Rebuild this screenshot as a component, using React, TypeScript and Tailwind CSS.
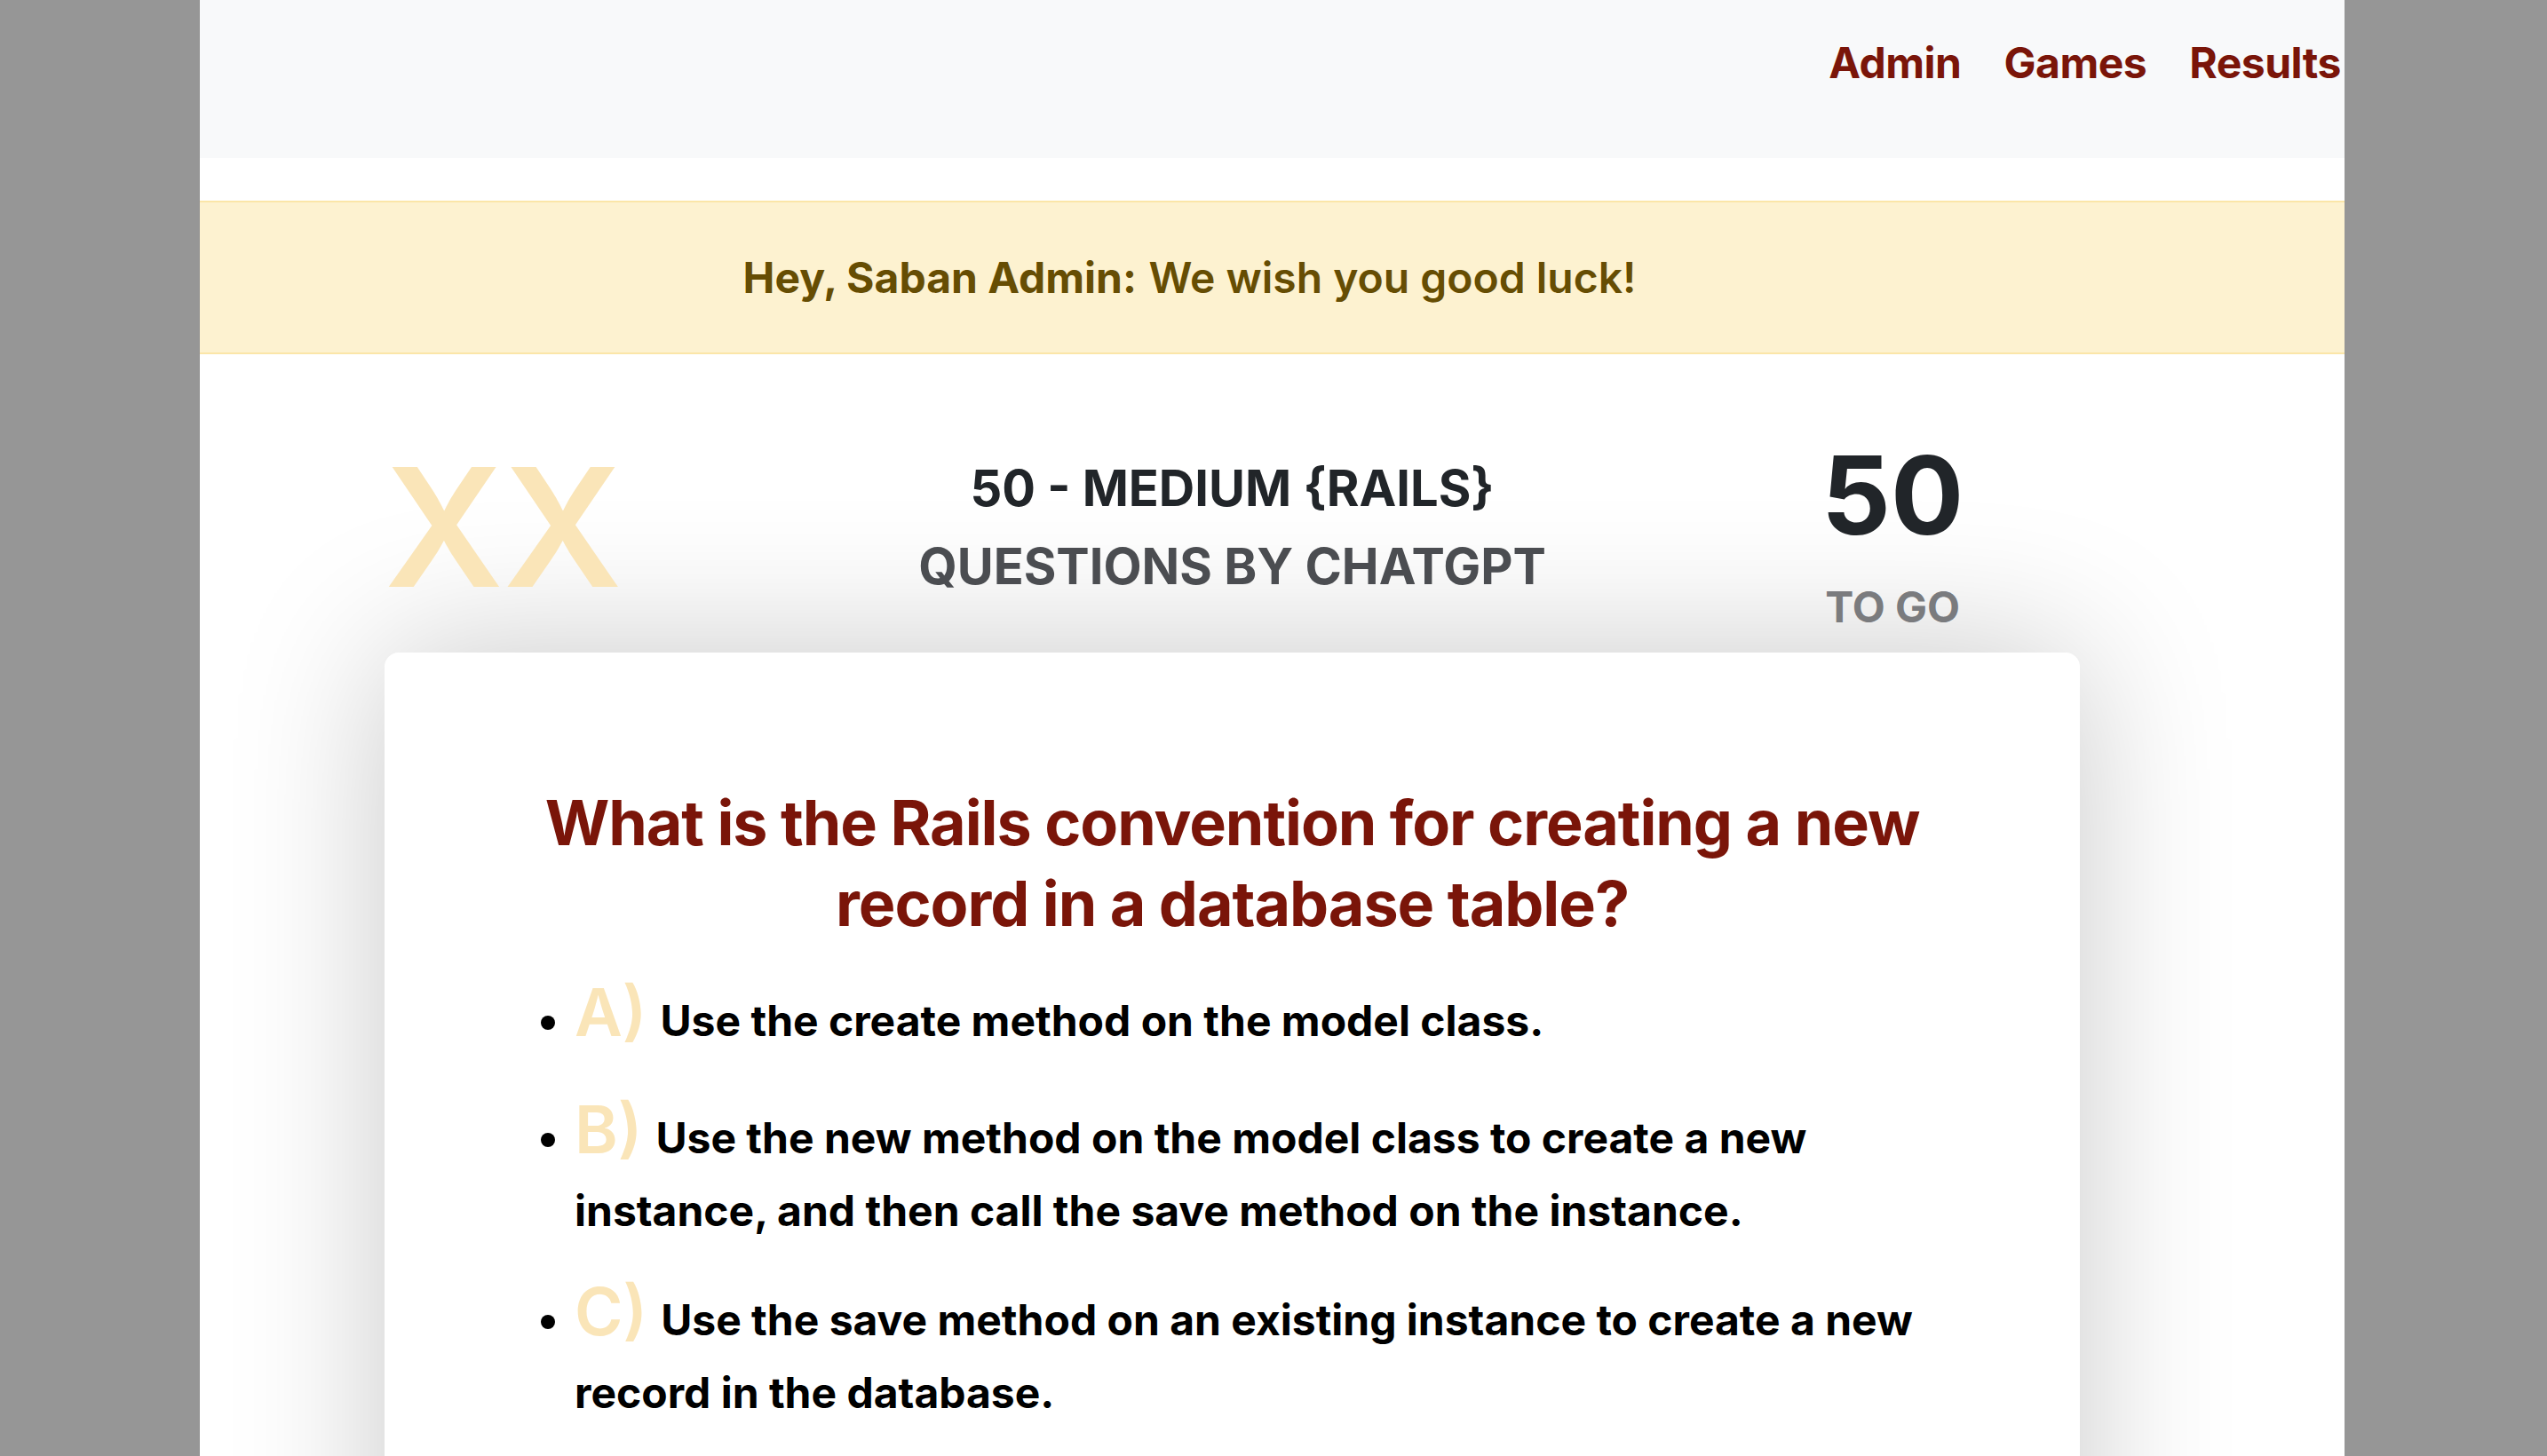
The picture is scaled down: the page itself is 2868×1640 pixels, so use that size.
import React from "react"

const options = [
  { letter: "A)", text: "Use the create method on the model class." },
  {
    letter: "B)",
    text: "Use the new method on the model class to create a new instance, and then call the save method on the instance.",
  },
  {
    letter: "C)",
    text: "Use the save method on an existing instance to create a new record in the database.",
  },
  {
    letter: "D)",
    text: "Use the insert method on the model class.",
  },
]

export default function App() {
  return (
    <div className="h-[1640px] overflow-hidden bg-[#969696] font-['Inter',sans-serif]">
      <div className="ml-[225px] w-[2415px] h-[1640px] bg-white">
        <header className="h-[178px] bg-[#f8f9fa] flex justify-end pt-[47px] pr-[4px]">
          <nav className="flex gap-[48px] text-[48px] leading-[48px] font-bold text-[#7a1509] tracking-[-0.01em]">
            <a href="#">Admin</a>
            <a href="#">Games</a>
            <a href="#">Results</a>
          </nav>
        </header>

        <div className="mt-[48px] h-[173px] bg-[#fdf2d0] border-y-2 border-[#fbe6a8] flex items-center justify-center pr-[186px] text-[48px] text-[#664d03]">
          <p>
            <span className="font-bold">Hey, Saban Admin:</span>{" "}
            <span className="font-semibold">We wish you good luck!</span>
          </p>
        </div>

        <div className="ml-[208px] w-[1909px]">
          {/* title row */}
          <div className="grid grid-cols-[318px_1273px_318px] items-start h-[336px]">
            <div className="pt-[102px] text-[186px] leading-[186px] text-[#fae5b8] font-semibold">XX</div>
            <div className="pt-[107px] text-center text-[56px] leading-[88px] font-bold">
              <div className="text-[#212529]">50 - MEDIUM {"{RAILS}"}</div>
              <div className="text-[#4b4d51]">QUESTIONS BY CHATGPT</div>
            </div>
            <div className="pt-[98px] pl-[27px]">
              <div className="w-fit flex flex-col items-center whitespace-nowrap">
                <div className="text-[122px] leading-[122px] font-bold text-[#212529]">50</div>
                <div className="mt-[41px] text-[48px] leading-[48px] font-bold text-[#7a7b7e]">TO GO</div>
              </div>
            </div>
          </div>

          <div className="rounded-[16px] bg-white shadow-[0_0_170px_rgba(0,0,0,0.22)] px-[155px] pt-[146px] pb-[120px]">
            <h1 className="text-center text-[70px] leading-[91px] font-bold tracking-[-0.015em] text-[#7a1509] mb-[46px]">
              What is the Rails convention for creating a new record in a database table?
            </h1>
            <ul className="list-disc pl-[59px] text-[48px] leading-[82px] font-bold text-black">
              {options.map((o) => (
                <li key={o.letter} className="mb-[41px] first:mb-[50px]">
                  <span className="text-[74px] leading-[60px] font-semibold text-[#fae5b8] mr-[15px]">{o.letter}</span>
                  {o.text}
                </li>
              ))}
            </ul>
          </div>
        </div>
      </div>
    </div>
  )
}
